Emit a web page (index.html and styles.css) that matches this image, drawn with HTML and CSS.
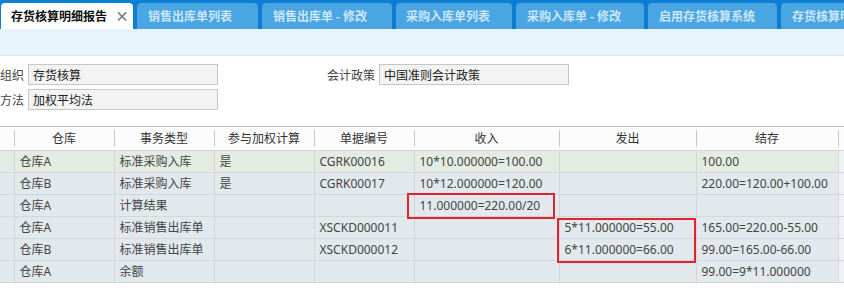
FILE: index.html
```html
<!DOCTYPE html>
<html>
<head>
<meta charset="utf-8">
<title>存货核算明细报告</title>
<link rel="stylesheet" href="styles.css">
</head>
<body>
<div class="tabbar">
  <div class="tab tab-on">存货核算明细报告<span class="tab-x">×</span></div>
  <div class="tab">销售出库单列表</div>
  <div class="tab">销售出库单 - 修改</div>
  <div class="tab">采购入库单列表</div>
  <div class="tab">采购入库单 - 修改</div>
  <div class="tab">启用存货核算系统</div>
  <div class="tab">存货核算明细报告</div>
</div>
<div class="subbar"></div>

<div class="filter">
  <div class="frow">
    <span class="flabel">组织</span><span class="fbox">存货核算</span>
    <span class="flabel flabel-wide">会计政策</span><span class="fbox">中国准则会计政策</span>
  </div>
  <div class="frow">
    <span class="flabel">方法</span><span class="fbox">加权平均法</span>
  </div>
</div>

<div class="grid">
  <table>
    <colgroup>
      <col class="c-idx"><col class="c-100"><col class="c-100"><col class="c-100"><col class="c-100">
      <col class="c-in"><col class="c-out"><col class="c-bal"><col class="c-more">
    </colgroup>
    <thead>
      <tr><th></th><th>仓库</th><th>事务类型</th><th>参与加权计算</th><th>单据编号</th><th>收入</th><th>发出</th><th>结存</th><th></th></tr>
    </thead>
    <tbody>
      <tr class="row-sel"><td></td><td>仓库A</td><td>标准采购入库</td><td>是</td><td>CGRK00016</td><td>10*10.000000=100.00</td><td></td><td>100.00</td><td></td></tr>
      <tr><td></td><td>仓库B</td><td>标准采购入库</td><td>是</td><td>CGRK00017</td><td>10*12.000000=120.00</td><td></td><td>220.00=120.00+100.00</td><td></td></tr>
      <tr><td></td><td>仓库A</td><td>计算结果</td><td></td><td></td><td>11.000000=220.00/20</td><td></td><td></td><td></td></tr>
      <tr><td></td><td>仓库A</td><td>标准销售出库单</td><td></td><td>XSCKD000011</td><td></td><td>5*11.000000=55.00</td><td>165.00=220.00-55.00</td><td></td></tr>
      <tr><td></td><td>仓库B</td><td>标准销售出库单</td><td></td><td>XSCKD000012</td><td></td><td>6*11.000000=66.00</td><td>99.00=165.00-66.00</td><td></td></tr>
      <tr><td></td><td>仓库A</td><td>余额</td><td></td><td></td><td></td><td></td><td>99.00=9*11.000000</td><td></td></tr>
    </tbody>
  </table>
  <div class="mark mark-in"></div>
  <div class="mark mark-out"></div>
</div>
</body>
</html>
```

FILE: styles.css
```css
*{
  box-sizing:border-box;
}
html,body{
  margin:0;
  padding:0;
  background:#fff;
  overflow:hidden;
}
body{
  width:844px;
  height:299px;
  font-family:"Noto Sans","Noto Sans CJK SC",sans-serif;
  font-size:12px;
  color:#333;
}

/* tabs */
.tabbar{
  height:29px;
  background:#0c7ed4;
  display:flex;
  align-items:flex-end;
  gap:4px;
  padding-left:1px;
  white-space:nowrap;
  overflow:hidden;
}
.tab{
  flex:none;
  height:26px;
  line-height:25px;
  padding-left:11px;
  background:#4aa5e3;
  color:#cde6f8;
  font-weight:bold;
  border-radius:4px 4px 0 0;
  font-family:"Noto Sans CJK SC",sans-serif;
}
.tab:nth-child(1){ width:132px; padding-left:10px; }
.tab:nth-child(2){ width:121px; }
.tab:nth-child(3){ width:130px; }
.tab:nth-child(4){ width:116px; padding-left:10px; }
.tab:nth-child(5){ width:128px; }
.tab:nth-child(6){ width:129px; }
.tab:nth-child(7){ width:120px; }
.tab-on{
  background:#fff;
  color:#111;
}
.tab-x{
  color:#777;
  font-size:14px;
  margin-left:8px;
}
.subbar{
  height:27px;
  background:#e8f4fc;
  border-bottom:1px solid #d4e6f3;
}

/* filter form */
.filter{
  height:71px;
  padding-top:8px;
  border-bottom:1px solid #c2c2c2;
}
.frow{
  display:flex;
  align-items:center;
  height:21px;
  margin-bottom:4px;
}
.flabel{
  flex:none;
  display:flex;
  justify-content:flex-end;
  width:24px;
  margin-right:4px;
  white-space:nowrap;
  color:#444;
  font-family:"Noto Sans CJK SC",sans-serif;
}
.flabel-wide{
  width:48px;
  margin-left:109px;
}
.fbox{
  flex:none;
  width:190px;
  height:21px;
  line-height:19px;
  padding-left:4px;
  background:#f3f3f3;
  border:1px solid #c6c6c6;
  color:#222;
  white-space:nowrap;
  font-family:"Noto Sans CJK SC",sans-serif;
}

/* grid */
.grid{
  position:relative;
  height:172px;
  overflow:hidden;
}
table{
  border-collapse:collapse;
  table-layout:fixed;
  width:868px;
}
.c-idx{ width:14px; }
.c-100{ width:100px; }
.c-in{ width:145px; }
.c-out{ width:137px; }
.c-bal{ width:142px; }
.c-more{ width:30px; }
th{
  position:relative;
  height:23px;
  padding:0;
  font-weight:normal;
  color:#333;
  background:#fcfcfc;
  border-bottom:1px solid #d2d6d8;
  text-align:center;
}
th::before{
  content:"";
  position:absolute;
  left:0;
  top:3px;
  bottom:3px;
  width:1px;
  background:#c5c9cc;
}
th:first-child::before{
  display:none;
}
td{
  height:22px;
  padding:0 0 0 5px;
  border:1px solid #d0d8dd;
  border-top:none;
  background:#e2e9ed;
  color:#444;
  white-space:nowrap;
  overflow:hidden;
}
td:first-child{
  border-left:none;
}
.row-sel td{
  background:#e3ebe3;
}
td:last-child{
  background:#eef2f4;
}

/* highlight boxes */
.mark{
  position:absolute;
  border:2px solid #e2222d;
}
.mark-in{
  left:407px;
  top:66px;
  width:148px;
  height:26px;
}
.mark-out{
  left:557px;
  top:91px;
  width:139px;
  height:45px;
}
```
